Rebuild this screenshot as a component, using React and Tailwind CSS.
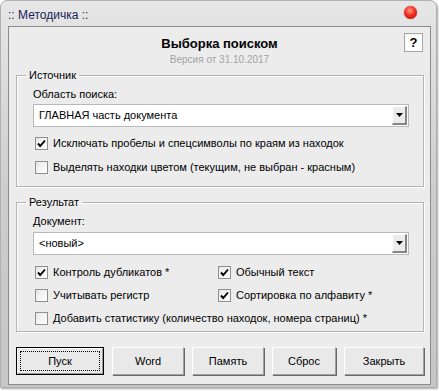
const font = "font-['Liberation_Sans',Arial,sans-serif]";

function Check({ checked }) {
  return (
    <span className="w-[13px] h-[13px] shrink-0 border border-[#8f8f8f] bg-gradient-to-br from-[#e8e8e8] to-white flex items-center justify-center">
      {checked && (
        <svg width="11" height="11" viewBox="0 0 11 11">
          <path d="M2 5.5 L4.2 8 L9 2.5" fill="none" stroke="#000" strokeWidth="1.9" />
        </svg>
      )}
    </span>
  );
}

function CheckRow({ checked, label, className = '' }) {
  return (
    <div className={`flex items-center ${className}`}>
      <span className="ml-[2px]"><Check checked={checked} /></span>
      <span className="ml-[5px] text-[11px] text-black whitespace-nowrap">{label}</span>
    </div>
  );
}

function Combo({ value }) {
  return (
    <div className="w-[376px] h-[23px] border border-[#b9b9b9] bg-white flex items-center p-[1px]">
      <span className="flex-1 pl-[4px] text-[11px] text-black">{value}</span>
      <span className="w-[15px] h-[19px] bg-[#ececec] border-l border-t border-l-white border-t-white border-r-2 border-b-2 border-r-[#858585] border-b-[#858585] flex items-center justify-center">
        <svg width="7" height="4" viewBox="0 0 7 4">
          <path d="M0 0 H7 L3.5 4 Z" fill="#000" />
        </svg>
      </span>
    </div>
  );
}

function Group({ title, className = '', children }) {
  return (
    <fieldset className={`ml-[7px] w-[408px] border border-[#b4b4b4] shadow-[inset_1px_1px_0_#fff,1px_1px_0_#fff] pl-[16px] ${className}`}>
      <legend className="-ml-[7px] px-[3px] text-[11px] leading-[14px] text-black">{title}</legend>
      {children}
    </fieldset>
  );
}

function Btn({ label, w, focused }) {
  if (focused) {
    return (
      <div className={`${w} h-[28px] border border-black p-0`}>
        <div className="w-full h-full bg-[#e9e9e9] border border-t-white border-l-white border-r-[#9a9a9a] border-b-[#9a9a9a] p-[2px]">
          <div className="w-full h-full border border-dotted border-black flex items-center justify-center text-[11px] text-black">
            {label}
          </div>
        </div>
      </div>
    );
  }
  return (
    <div className={`${w} h-[28px] bg-[#e9e9e9] border border-t-white border-l-white border-r-[#a0a0a0] border-b-[#a0a0a0] shadow-[1px_1px_0_#6a6a6a] flex items-center justify-center text-[11px] text-black`}>
      {label}
    </div>
  );
}

export default function App() {
  return (
    <div className={`w-[439px] h-[391px] bg-white ${font}`}>
      <div className="w-[437px] h-[388px] rounded-t-[7px] bg-gradient-to-b from-[#e6e6e6] via-[#cdcdcd] to-[#c6c6c6] border border-[#b0b0b0] shadow-[1px_1px_2px_rgba(0,0,0,0.35)] flex flex-col">
        {/* title bar */}
        <div className="h-[25px] flex items-center justify-between pl-[7px] pr-[19px]">
          <span className="text-[12px] text-[#1c1c5a] pt-[3px]">:: Методичка ::</span>
          <span className="w-[13px] h-[13px] rounded-full bg-[radial-gradient(circle_at_45%_35%,#ff9a8a_0%,#f03020_45%,#b00000_100%)] shadow-[0_0_1px_#800000] mt-[-2px]" />
        </div>

        {/* client area */}
        <div className="ml-[7px] w-[423px] h-[359px] border border-[#8c8c8c] bg-[#ececec] flex flex-col">
          <div className="grid grid-cols-[1fr_auto_1fr] h-[41px]">
            <div />
            <div className="flex flex-col items-center pt-[8px]">
              <span className="text-[13px] leading-[18px] font-bold text-black">Выборка поиском</span>
              <span className="text-[10px] leading-[14px] text-[#a3a3a3]">Версия от 31.10.2017</span>
            </div>
            <div className="flex justify-end items-start">
              <div className="mt-[6px] mr-[7px] w-[19px] h-[19px] border border-[#a7a7a7] bg-white shadow-[inset_1px_1px_0_#f4f4f4] flex items-center justify-center text-[13px] font-bold text-black">
                ?
              </div>
            </div>
          </div>

          <Group title="Источник" className="h-[119px]">
            <div className="mt-[5px] h-[14px] text-[11px] leading-[14px] text-black">Область поиска:</div>
            <div className="mt-[3px]"><Combo value="ГЛАВНАЯ часть документа" /></div>
            <CheckRow className="mt-[4px] h-[24px]" checked label="Исключать пробелы и спецсимволы по краям из находок" />
            <CheckRow className="h-[25px]" label="Выделять находки цветом (текущим, не выбран - красным)" />
          </Group>

          <Group title="Результат" className="mt-[8px] h-[137px]">
            <div className="mt-[5px] h-[14px] text-[11px] leading-[14px] text-black">Документ:</div>
            <div className="mt-[4px]"><Combo value="<новый>" /></div>
            <div className="mt-[6px] grid grid-cols-[183px_1fr]">
              <CheckRow className="h-[23px]" checked label="Контроль дубликатов *" />
              <CheckRow className="h-[23px]" checked label="Обычный текст" />
              <CheckRow className="h-[23px]" label="Учитывать регистр" />
              <CheckRow className="h-[23px]" checked label="Сортировка по алфавиту *" />
              <CheckRow className="h-[23px] col-span-2" label="Добавить статистику (количество находок, номера страниц) *" />
            </div>
          </Group>

          <div className="mt-[15px] ml-[7px] flex gap-[8px]">
            <Btn label="Пуск" w="w-[88px]" focused />
            <Btn label="Word" w="w-[72px]" />
            <Btn label="Память" w="w-[72px]" />
            <Btn label="Сброс" w="w-[64px]" />
            <Btn label="Закрыть" w="w-[80px]" />
          </div>
        </div>
      </div>
    </div>
  );
}
